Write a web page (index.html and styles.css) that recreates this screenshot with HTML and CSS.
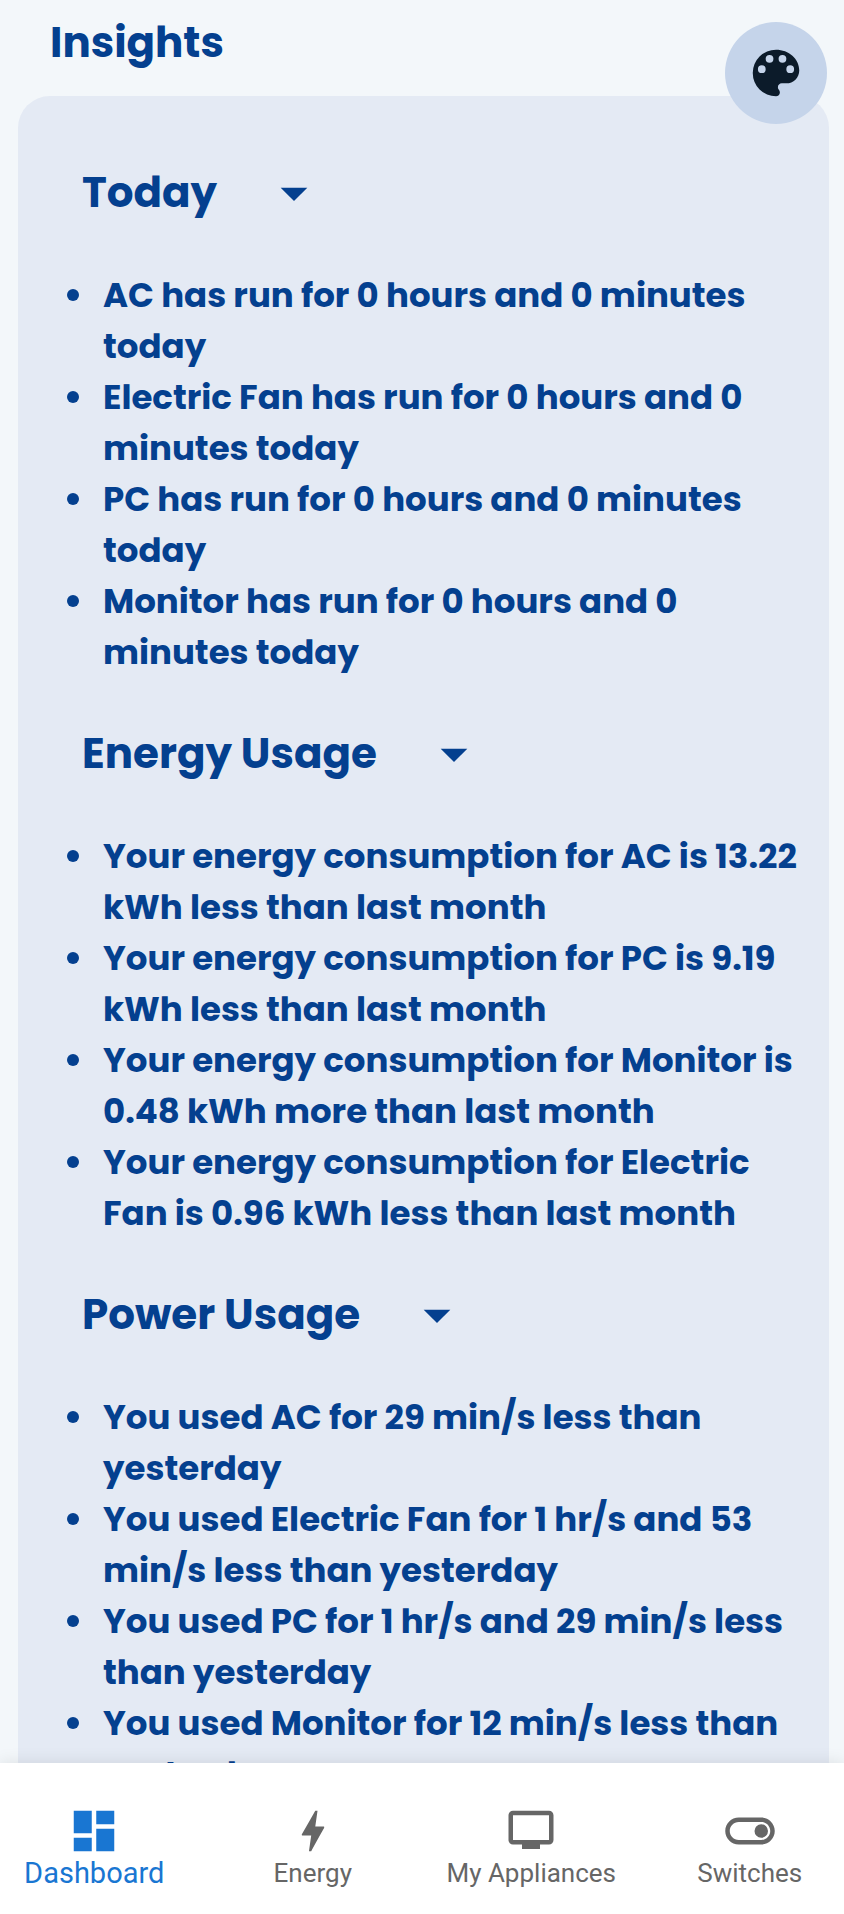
FILE: index.html
```html
<!DOCTYPE html>
<html lang="en">
<head>
<meta charset="utf-8">
<meta name="viewport" content="width=device-width, initial-scale=1">
<title>Insights</title>
<link rel="stylesheet" href="styles.css">
</head>
<body>
<div class="app">
  <main class="content">
    <h1 class="title">Insights</h1>
    <div class="card">
      <section class="group">
        <h2 class="heading"><button class="toggle" type="button" aria-expanded="true">Today
          <svg class="arrow" viewBox="0 0 24 24" aria-hidden="true"><path d="M7 10l5 5 5-5z"/></svg></button></h2>
        <ul class="list">
          <li>AC has run for 0 hours and 0 minutes today</li>
          <li>Electric Fan has run for 0 hours and 0 minutes today</li>
          <li>PC has run for 0 hours and 0 minutes today</li>
          <li>Monitor has run for 0 hours and 0 minutes today</li>
        </ul>
      </section>
      <section class="group">
        <h2 class="heading"><button class="toggle" type="button" aria-expanded="true">Energy Usage
          <svg class="arrow" viewBox="0 0 24 24" aria-hidden="true"><path d="M7 10l5 5 5-5z"/></svg></button></h2>
        <ul class="list">
          <li>Your energy consumption for AC is 13.22 kWh less than last month</li>
          <li>Your energy consumption for PC is 9.19 kWh less than last month</li>
          <li>Your energy consumption for Monitor is 0.48 kWh more than last month</li>
          <li>Your energy consumption for Electric Fan is 0.96 kWh less than last month</li>
        </ul>
      </section>
      <section class="group">
        <h2 class="heading"><button class="toggle" type="button" aria-expanded="true">Power Usage
          <svg class="arrow" viewBox="0 0 24 24" aria-hidden="true"><path d="M7 10l5 5 5-5z"/></svg></button></h2>
        <ul class="list">
          <li>You used AC for 29 min/s less than yesterday</li>
          <li>You used Electric Fan for 1 hr/s and 53 min/s less than yesterday</li>
          <li>You used PC for 1 hr/s and 29 min/s less than yesterday</li>
          <li>You used Monitor for 12 min/s less than yesterday</li>
        </ul>
      </section>
    </div>
  </main>
  <button class="fab" type="button" aria-label="Change theme">
    <svg class="fab-icon" viewBox="0 0 24 24" aria-hidden="true"><path d="M12 3a9 9 0 0 0 0 18c.83 0 1.500-.67 1.500-1.500 0-.39-.15-.74-.39-1.010-.23-.26-.38-.61-.38-.99 0-.83.67-1.500 1.500-1.500H16c2.760 0 5-2.240 5-5 0-4.420-4.030-8-9-8zm-5.500 9a1.500 1.500 0 1 1 0-3 1.500 1.500 0 0 1 0 3zm3-4a1.500 1.500 0 1 1 0-3 1.500 1.500 0 0 1 0 3zm5 0a1.500 1.500 0 1 1 0-3 1.500 1.500 0 0 1 0 3zm3 4a1.500 1.500 0 1 1 0-3 1.500 1.500 0 0 1 0 3z"/></svg>
  </button>
  <nav class="nav" aria-label="Main">
    <div class="tabs">
      <a class="tab tab-active" href="#dashboard" aria-current="page"><svg class="tab-icon" viewBox="0 0 24 24" aria-hidden="true"><path d="M3 13h8V3H3v10zm0 8h8v-6H3v6zm10 0h8V11h-8v10zm0-18v6h8V3h-8z"/></svg>Dashboard</a>
      <a class="tab" href="#energy"><svg class="tab-icon" viewBox="0 0 24 24" aria-hidden="true"><path d="M11.200 21h-1l1-7H7.500c-.88 0-.33-.75-.31-.78C8.480 10.940 10.420 7.540 13.010 3h1l-1 7h3.510c.4 0 .62.190.4.660C12.970 17.550 11.200 21 11.200 21z"/></svg>Energy</a>
      <a class="tab" href="#appliances"><svg class="tab-icon" viewBox="0 0 24 24" aria-hidden="true"><path d="M20 3H4c-1.100 0-2 .9-2 2v11c0 1.100.9 2 2 2h4v2h8v-2h4c1.100 0 2-.9 2-2V5c0-1.100-.9-2-2-2zm0 13H4V5h16v11z"/></svg>My Appliances</a>
      <a class="tab" href="#switches"><svg class="tab-icon" viewBox="0 0 24 24" aria-hidden="true"><path d="M17 6H7c-3.310 0-6 2.690-6 6s2.690 6 6 6h10c3.310 0 6-2.690 6-6s-2.690-6-6-6zm0 10H7c-2.210 0-4-1.790-4-4s1.790-4 4-4h10c2.210 0 4 1.790 4 4s-1.790 4-4 4zm0-7a3 3 0 1 0 0 6 3 3 0 0 0 0-6z"/></svg>Switches</a>
    </div>
  </nav>
</div>
</body>
</html>
```
FILE: styles.css
```css
* { box-sizing: border-box; }
body {
  margin: 0;
  background: #f3f7fa;
  color: #04408f;
  font-family: Poppins, Inter, sans-serif;
}
.app {
  display: flex;
  flex-direction: column;
  height: 100vh;
}
.content {
  flex: 1;
  min-height: 0;
  overflow-y: auto;
  scrollbar-width: none;
  padding: 11px 15px 0 18px;
}
.title {
  margin: 0 0 21px;
  padding-left: 32px;
  font-size: 42px;
  font-weight: 700;
  line-height: 64px;
}
.card {
  padding: 65px 24px 48px 32px;
  border-radius: 32px;
  background: #e4eaf4;
}
.group + .group { margin-top: 44px; }
.heading {
  margin: 0 0 45px;
  padding-left: 32px;
  line-height: 64px;
}
.toggle {
  display: flex;
  align-items: center;
  gap: 45px;
  padding: 0;
  border: 0;
  background: none;
  color: inherit;
  font: 700 42px/64px Poppins, Inter, sans-serif;
  cursor: pointer;
}
.arrow {
  width: 64px;
  height: 64px;
  fill: currentColor;
}
.list {
  margin: 0;
  padding: 0;
  list-style: none;
  font-size: 34px;
  font-weight: 700;
  line-height: 51px;
}
.list li {
  display: flex;
}
.list li::before {
  content: "";
  flex: none;
  width: 12px;
  height: 12px;
  margin: 19px 24px 0 17px;
  border-radius: 50%;
  background: currentColor;
}
.fab {
  position: fixed;
  top: 22px;
  right: 17px;
  display: grid;
  place-items: center;
  width: 102px;
  height: 102px;
  padding: 0;
  border: 0;
  border-radius: 50%;
  background: #c5d4ea;
  color: #0c1b2a;
  cursor: pointer;
}
.fab-icon {
  width: 62px;
  height: 62px;
  fill: currentColor;
}
.nav {
  position: relative;
  overflow-x: clip;
  background: #fff;
  box-shadow: 0 0 16px rgba(0, 0, 0, 0.1);
}
.tabs {
  display: grid;
  grid-template-columns: repeat(4, 1fr);
  margin: 0 -15px;
}
.tab {
  display: flex;
  flex-direction: column;
  align-items: center;
  padding: 41px 0 26px;
  color: #666;
  font: 26px/30px Roboto, sans-serif;
  text-decoration: none;
  white-space: nowrap;
}
.tab-active {
  color: #1976d2;
  font-size: 29px;
}
.tab-icon {
  width: 54px;
  height: 54px;
  fill: currentColor;
}
```
